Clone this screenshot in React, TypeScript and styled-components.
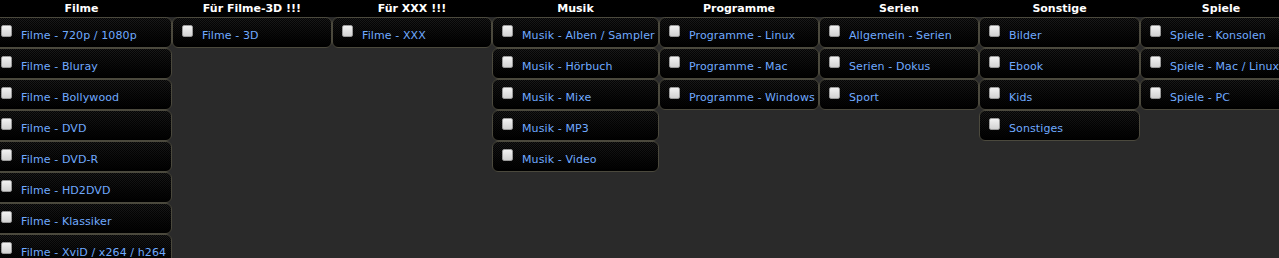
import { createGlobalStyle, styled } from "styled-components";

const GlobalStyle = createGlobalStyle`
  html, body {
    margin: 0;
    padding: 0;
    background: #2a2a2a;
    overflow: hidden;
  }
`;

interface Category {
  title: string;
  width: number;
  items: string[];
}

const categories: Category[] = [
  {
    title: "Filme",
    width: 181,
    items: [
      "Filme - 720p / 1080p",
      "Filme - Bluray",
      "Filme - Bollywood",
      "Filme - DVD",
      "Filme - DVD-R",
      "Filme - HD2DVD",
      "Filme - Klassiker",
      "Filme - XviD / x264 / h264",
    ],
  },
  { title: "Für Filme-3D !!!", width: 160, items: ["Filme - 3D"] },
  { title: "Für XXX !!!", width: 160, items: ["Filme - XXX"] },
  {
    title: "Musik",
    width: 167,
    items: ["Musik - Alben / Sampler", "Musik - Hörbuch", "Musik - Mixe", "Musik - MP3", "Musik - Video"],
  },
  { title: "Programme", width: 160, items: ["Programme - Linux", "Programme - Mac", "Programme - Windows"] },
  { title: "Serien", width: 160, items: ["Allgemein - Serien", "Serien - Dokus", "Sport"] },
  { title: "Sonstige", width: 161, items: ["Bilder", "Ebook", "Kids", "Sonstiges"] },
  { title: "Spiele", width: 162, items: ["Spiele - Konsolen", "Spiele - Mac / Linux", "Spiele - PC"] },
];

const Board = styled.div`
  display: flex;
  align-items: flex-start;
  margin-left: -9px;
  width: max-content;
  font-family: "DejaVu Sans", Verdana, sans-serif;
`;

const Column = styled.div<{ $width: number }>`
  display: flex;
  flex-direction: column;
  width: ${(p) => p.$width}px;
  flex-shrink: 0;
`;

const Header = styled.div`
  height: 17px;
  line-height: 18px;
  background: #000;
  color: #fff;
  font-weight: bold;
  font-size: 11px;
  text-align: center;
  white-space: nowrap;
`;

const Cell = styled.label`
  display: flex;
  align-items: flex-start;
  box-sizing: border-box;
  height: 31px;
  padding: 7px 0 0 9px;
  border: 1px solid #4b493d;
  border-radius: 6px;
  background-color: #000;
  background-image: linear-gradient(to bottom, rgba(0, 0, 0, 0) 0%, rgba(0, 0, 0, 0.6) 55%, #000 100%),
    repeating-conic-gradient(#1c1c1c 0% 25%, #050505 0% 50%);
  background-size: 100% 100%, 2px 2px;
  cursor: pointer;
  white-space: nowrap;
  overflow: hidden;
`;

const Box = styled.input`
  appearance: none;
  margin: 0;
  width: 11px;
  height: 12px;
  flex-shrink: 0;
  border: 1px solid #9a9a9a;
  border-radius: 2px;
  background: linear-gradient(to bottom, #f2f2f2, #d2d2d2);
  box-sizing: border-box;
`;

const Label = styled.span`
  margin: 4px 0 0 9px;
  font-size: 11px;
  line-height: 13px;
  letter-spacing: 0.1px;
  color: #70aaff;
`;

export default function App() {
  return (
    <>
      <GlobalStyle />
      <Board>
        {categories.map((cat) => (
          <Column key={cat.title} $width={cat.width}>
            <Header>{cat.title}</Header>
            {cat.items.map((item) => (
              <Cell key={item}>
                <Box type="checkbox" />
                <Label>{item}</Label>
              </Cell>
            ))}
          </Column>
        ))}
      </Board>
    </>
  );
}
